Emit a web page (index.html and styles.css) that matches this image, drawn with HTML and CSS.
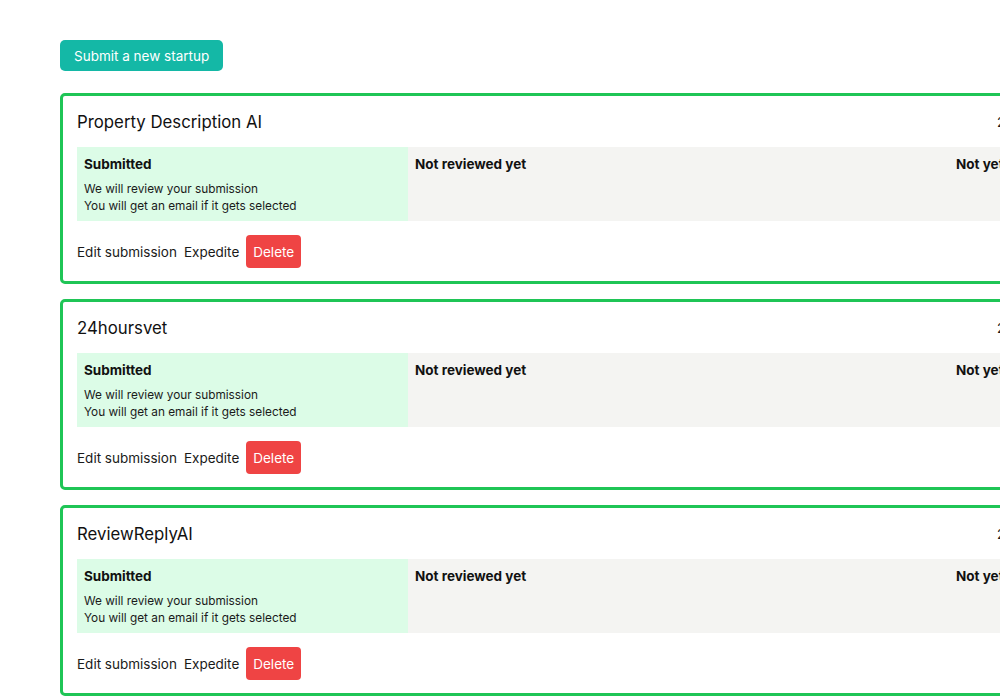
FILE: index.html
```html
<!DOCTYPE html>
<html>
<head>
<meta charset="utf-8">
<link rel="stylesheet" href="styles.css">
</head>
<body>
<main class="page">
  <button class="btn-primary">Submit a new startup</button>

  <section class="card">
    <div class="card-head"><h2 class="card-title">Property Description AI</h2><span class="card-meta">2 days ago</span></div>
    <div class="status">
      <div class="step done"><div class="step-title">Submitted</div><p class="step-text">We will review your submission<br>You will get an email if it gets selected</p></div>
      <div class="step"><div class="step-title">Not reviewed yet</div></div>
      <div class="step"><div class="step-title">Not yet selected</div></div>
    </div>
    <div class="actions"><a class="link">Edit submission</a><a class="link">Expedite</a><button class="btn-danger">Delete</button></div>
  </section>

  <section class="card">
    <div class="card-head"><h2 class="card-title">24hoursvet</h2><span class="card-meta">2 days ago</span></div>
    <div class="status">
      <div class="step done"><div class="step-title">Submitted</div><p class="step-text">We will review your submission<br>You will get an email if it gets selected</p></div>
      <div class="step"><div class="step-title">Not reviewed yet</div></div>
      <div class="step"><div class="step-title">Not yet selected</div></div>
    </div>
    <div class="actions"><a class="link">Edit submission</a><a class="link">Expedite</a><button class="btn-danger">Delete</button></div>
  </section>

  <section class="card">
    <div class="card-head"><h2 class="card-title">ReviewReplyAI</h2><span class="card-meta">2 days ago</span></div>
    <div class="status">
      <div class="step done"><div class="step-title">Submitted</div><p class="step-text">We will review your submission<br>You will get an email if it gets selected</p></div>
      <div class="step"><div class="step-title">Not reviewed yet</div></div>
      <div class="step"><div class="step-title">Not yet selected</div></div>
    </div>
    <div class="actions"><a class="link">Edit submission</a><a class="link">Expedite</a><button class="btn-danger">Delete</button></div>
  </section>
</main>
</body>
</html>
```

FILE: styles.css
```css
html, body {
  margin: 0;
  padding: 0;
  background: #ffffff;
  overflow: hidden;
}
body {
  font-family: Inter, "Noto Sans", sans-serif;
  color: #1a1a1a;
}
.page {
  padding: 40px 0 0 60px;
  width: 1300px;
  display: flex;
  flex-direction: column;
  align-items: flex-start;
}
.btn-primary {
  background: #14b8a6;
  color: #ffffff;
  border: none;
  border-radius: 5px;
  height: 31px;
  padding: 0 14px;
  font-family: inherit;
  font-size: 13.5px;
  margin-bottom: 22px;
}
.card {
  box-sizing: border-box;
  width: 1200px;
  border: 3px solid #1fc556;
  border-radius: 5px;
  padding: 14px 13px 13px 14px;
  margin-bottom: 15px;
  align-self: stretch;
}
.card-head {
  display: grid;
  grid-template-columns: 920px auto;
  align-items: center;
  height: 24px;
  margin-bottom: 13px;
}
.card-title {
  margin: 0;
  font-size: 16.8px;
  font-weight: 400;
  line-height: 24px;
  color: #111111;
}
.card-meta {
  font-size: 13.5px;
  color: #1a1a1a;
}
.status {
  display: grid;
  grid-template-columns: 331px 541px 1fr;
  background: #f4f4f2;
}
.step {
  padding: 7px 7px 6px;
}
.step.done {
  background: #dcfce7;
}
.step-title {
  font-size: 13.5px;
  font-weight: 700;
  line-height: 20px;
  color: #111111;
}
.step-text {
  margin: 7px 0 0;
  font-size: 11.8px;
  line-height: 17px;
  color: #1a1a1a;
}
.actions {
  display: flex;
  align-items: center;
  gap: 7px;
  margin-top: 14px;
}
.link {
  font-size: 13.5px;
  color: #1a1a1a;
}
.btn-danger {
  background: #ef4444;
  color: #ffffff;
  border: none;
  border-radius: 4px;
  height: 33px;
  padding: 0 7px;
  font-family: inherit;
  font-size: 13.5px;
}
```
